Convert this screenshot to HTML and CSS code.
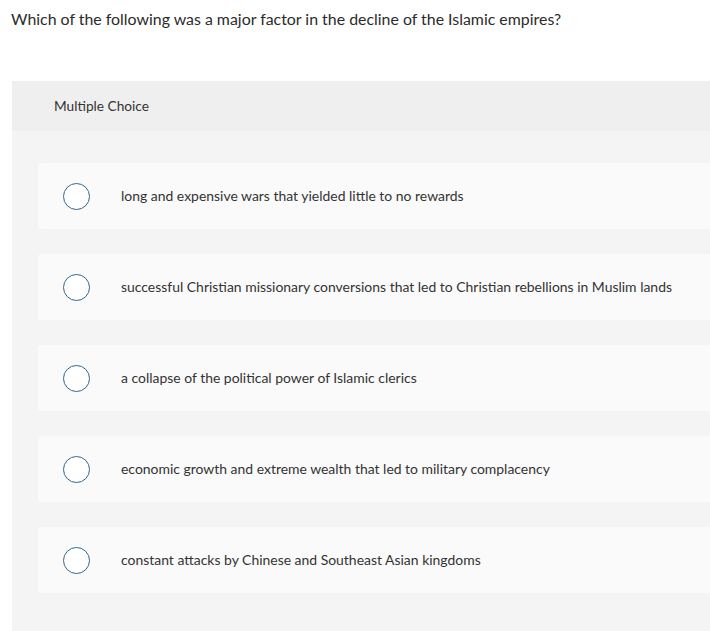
FILE: index.html
```html
<!DOCTYPE html>
<html>
<head>
<meta charset="utf-8">
<link rel="stylesheet" href="styles.css">
</head>
<body>
<p class="question">Which of the following was a major factor in the decline of the Islamic empires?</p>
<section class="panel">
  <div class="panel-head">Multiple Choice</div>
  <div class="options">
    <label class="option"><span class="radio"></span><span class="opt-text">long and expensive wars that yielded little to no rewards</span></label>
    <label class="option"><span class="radio"></span><span class="opt-text">successful Christian missionary conversions that led to Christian rebellions in Muslim lands</span></label>
    <label class="option"><span class="radio"></span><span class="opt-text">a collapse of the political power of Islamic clerics</span></label>
    <label class="option"><span class="radio"></span><span class="opt-text">economic growth and extreme wealth that led to military complacency</span></label>
    <label class="option"><span class="radio"></span><span class="opt-text">constant attacks by Chinese and Southeast Asian kingdoms</span></label>
  </div>
</section>
</body>
</html>
```
FILE: styles.css
```css
html, body {
  margin: 0;
  padding: 0;
  background: #ffffff;
  overflow: hidden;
}
body {
  font-family: Lato, "Liberation Sans", sans-serif;
  color: #333333;
}
.question {
  margin: 0;
  padding: 9px 0 0 11px;
  height: 81px;
  box-sizing: border-box;
  font-size: 15.9px;
  line-height: 20px;
  color: #2b2b2b;
}
.panel {
  margin-left: 12px;
  background: #f4f4f4;
  min-height: 560px;
}
.panel-head {
  height: 50px;
  background: #efefef;
  display: flex;
  align-items: center;
  padding-left: 42px;
  padding-bottom: 1px;
  box-sizing: border-box;
  font-size: 13.7px;
  color: #333333;
}
.options {
  display: flex;
  flex-direction: column;
  gap: 25px;
  padding: 32px 0 0 26px;
}
.option {
  display: flex;
  align-items: center;
  height: 66px;
  background: #fafafa;
  border-radius: 3px 0 0 3px;
  padding-left: 25px;
}
.radio {
  width: 25px;
  height: 25px;
  border: 1.5px solid #2f6690;
  border-radius: 50%;
  background: #ffffff;
  flex: none;
}
.opt-text {
  margin-left: 31px;
  padding-bottom: 2px;
  font-size: 13.95px;
  color: #333333;
}
```
